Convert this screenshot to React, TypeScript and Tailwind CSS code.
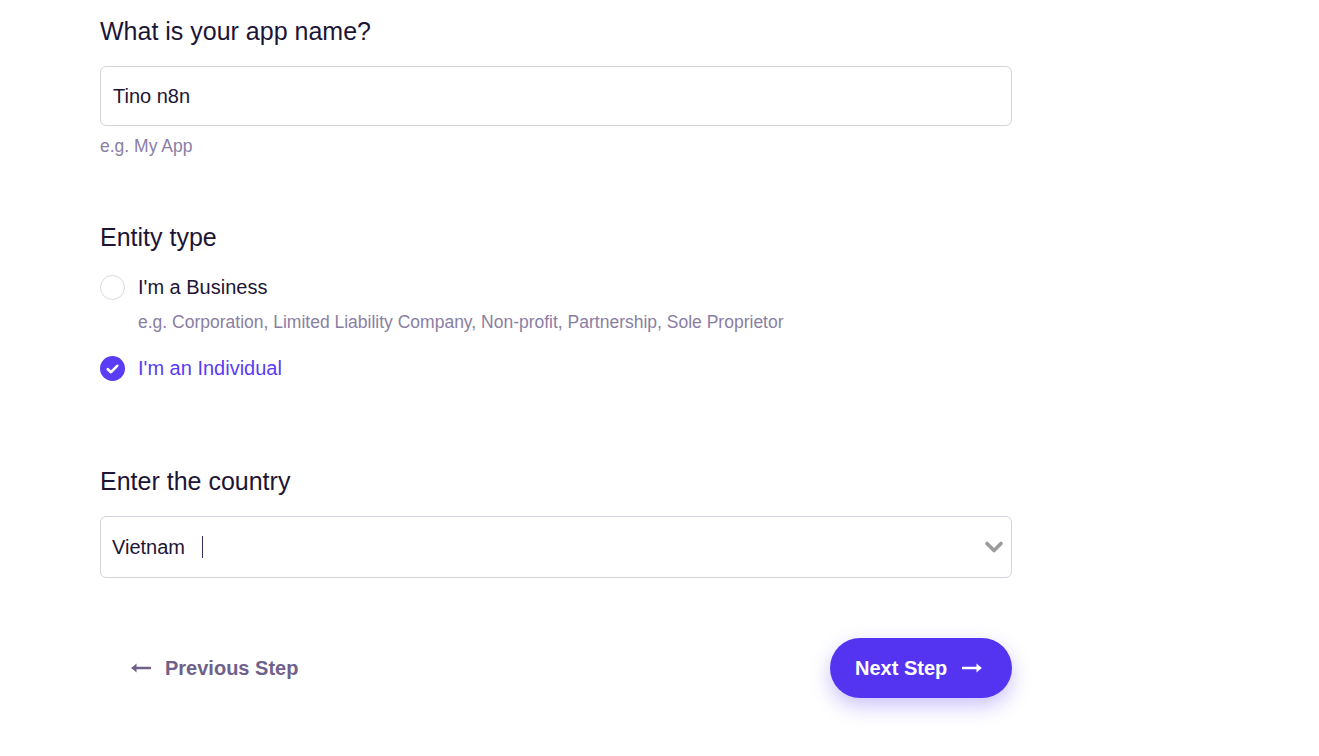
import { useState } from "react";

const font = { fontFamily: '"Liberation Sans", Arial, sans-serif' };

function ArrowLeft() {
  return (
    <svg width="21" height="12" viewBox="0 0 21 12" fill="none">
      <path d="M20 6H3" stroke="currentColor" strokeWidth="2.6" strokeLinecap="round" />
      <path d="M6.5 1.5L1.5 6l5 4.5z" fill="currentColor" />
    </svg>
  );
}

function ArrowRight() {
  return (
    <svg width="21" height="12" viewBox="0 0 21 12" fill="none">
      <path d="M1 6h17" stroke="currentColor" strokeWidth="2.6" strokeLinecap="round" />
      <path d="M14.5 1.5L19.5 6l-5 4.5z" fill="currentColor" />
    </svg>
  );
}

function Chevron() {
  return (
    <svg width="20" height="14" viewBox="0 0 20 14" fill="none">
      <path d="M3 3.5l7 7 7-7" stroke="#9b9b9b" strokeWidth="3.6" strokeLinecap="round" strokeLinejoin="round" />
    </svg>
  );
}

function Radio({ checked }: { checked: boolean }) {
  if (checked) {
    return (
      <span className="flex h-[25px] w-[25px] shrink-0 items-center justify-center rounded-full bg-[#5a3cf4]">
        <svg width="13" height="10" viewBox="0 0 13 10" fill="none">
          <path d="M1.8 5.2l3.2 3 6.2-6.4" stroke="white" strokeWidth="2.6" strokeLinecap="round" strokeLinejoin="round" />
        </svg>
      </span>
    );
  }
  return <span className="h-[25px] w-[25px] shrink-0 rounded-full border border-[#d6d9df] bg-white" />;
}

export default function App() {
  const [entity, setEntity] = useState<"business" | "individual">("individual");

  return (
    <div className="min-h-screen bg-white text-[#1d1535]" style={font}>
      <div className="ml-[100px] w-[912px] pt-4">
        <h2 className="text-[25px] leading-[30px]">What is your app name?</h2>
        <div className="mt-5 flex h-[60px] items-center rounded-md border border-[#d4d4dc] px-3 text-[20px]">
          Tino n8n
        </div>
        <p className="mt-[10px] text-[17.5px] leading-5 text-[#8a7ea3]">e.g. My App</p>

        <h2 className="mt-[66px] text-[25px] leading-[30px]">Entity type</h2>
        <button
          className="mt-[23px] flex items-center gap-[13px] text-left"
          onClick={() => setEntity("business")}
        >
          <Radio checked={entity === "business"} />
          <span className={`text-[20px] leading-[25px] ${entity === "business" ? "text-[#5a3cf4]" : "text-[#1d1535]"}`}>
            I'm a Business
          </span>
        </button>
        <p className="ml-[38px] mt-[12px] text-[17.5px] leading-5 text-[#8a7ea3]">
          e.g. Corporation, Limited Liability Company, Non-profit, Partnership, Sole Proprietor
        </p>
        <button
          className="mt-[24px] flex items-center gap-[13px] text-left"
          onClick={() => setEntity("individual")}
        >
          <Radio checked={entity === "individual"} />
          <span className={`text-[20px] leading-[25px] ${entity === "individual" ? "text-[#5a3cf4]" : "text-[#1d1535]"}`}>
            I'm an Individual
          </span>
        </button>

        <h2 className="mt-[85px] text-[25px] leading-[30px]">Enter the country</h2>
        <div className="mt-5 flex h-[62px] items-center rounded-md border border-[#d4d4dc] pl-[11px] pr-[7px] text-[20px]">
          <span>Vietnam</span>
          <span className="ml-[17px] h-[22px] w-px bg-[#3a2a5c]" />
          <span className="ml-auto">
            <Chevron />
          </span>
        </div>

        <div className="mt-[60px] flex items-center justify-between">
          <button className="flex items-center gap-[14px] pl-[30px] text-[20px] font-bold text-[#6f6189]">
            <ArrowLeft />
            Previous Step
          </button>
          <button className="flex h-[60px] w-[182px] items-center gap-[15px] rounded-full bg-[#5534f1] pl-[25px] text-[20px] font-bold text-white shadow-[0_8px_20px_rgba(85,52,241,0.3)]">
            Next Step
            <ArrowRight />
          </button>
        </div>
      </div>
    </div>
  );
}
